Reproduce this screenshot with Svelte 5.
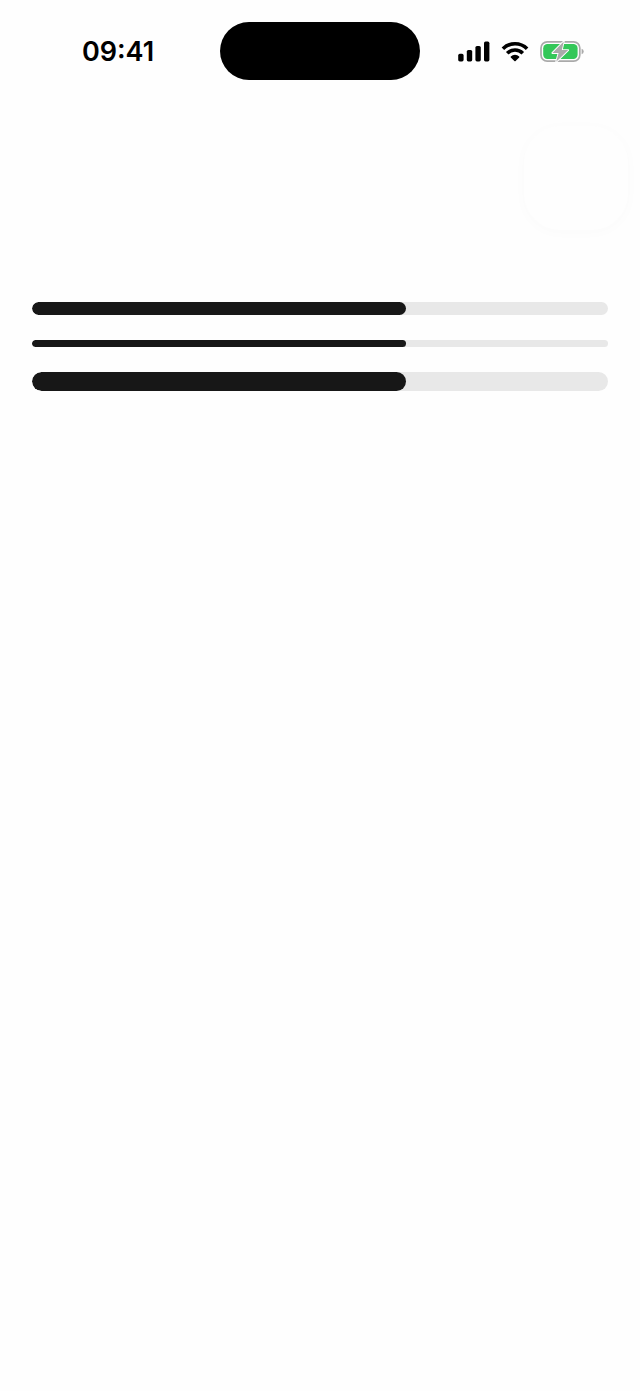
<script>
  const bars = [
    { label: 'Default progress', size: 'medium' },
    { label: 'Small progress', size: 'small' },
    { label: 'Large progress', size: 'large' }
  ];
  const value = 65;
</script>

<div class="screen">
  <header class="status">
    <time class="time">09:41</time>
    <div class="island"></div>
    <div class="indicators">
      <svg width="32" height="22" viewBox="0 0 32 22" aria-hidden="true">
        <rect x="0.2" y="12.8" width="5.4" height="7.6" rx="1.6" />
        <rect x="8.8" y="9" width="5.4" height="11.4" rx="1.6" />
        <rect x="17.4" y="5" width="5.4" height="15.4" rx="1.6" />
        <rect x="26" y="0.6" width="5.4" height="19.8" rx="1.6" />
      </svg>
      <svg width="28" height="22" viewBox="0 0 28 22" aria-hidden="true">
        <g fill="none" stroke="#000" stroke-width="3.6">
          <path d="M1.9 7.8a17.1 17.1 0 0 1 24.2 0" />
          <path d="M6.2 12.3a11 11 0 0 1 15.6 0" />
        </g>
        <path d="M9.8 15.4a6 6 0 0 1 8.4 0q.4.5 0 1l-3.6 3.6q-.6.5-1.2 0l-3.6-3.6q-.4-.5 0-1z" />
      </svg>
      <svg width="44" height="22" viewBox="0 0 44 22" aria-hidden="true">
        <rect x="1" y="0.9" width="38.8" height="19.2" rx="6.2" fill="none" stroke="#aaa" stroke-width="1.7" />
        <path d="M41.6 7.7q2.1.8 2.1 2.8t-2.1 2.8z" fill="#aaa" />
        <rect x="3.2" y="3.1" width="34.4" height="14.8" rx="4.2" fill="#34c759" />
        <path d="M23.8 0.4L12.4 12h6.2l-2.4 8.8L28.2 9.1h-6.4z" fill="#aaa" stroke="#fff" stroke-width="1.8" stroke-linejoin="round" paint-order="stroke" />
      </svg>
    </div>
  </header>

  <div class="toolbar">
    <button class="action" type="button" aria-label="Options"></button>
  </div>

  <main class="bars">
    {#each bars as bar}
      <progress class={bar.size} {value} max="100" aria-label={bar.label}></progress>
    {/each}
  </main>
</div>

<style>
  :global(body) {
    margin: 0;
    background: #fefefe;
  }

  .screen {
    min-height: 100vh;
    box-sizing: border-box;
    font-family: Inter, "Liberation Sans", sans-serif;
    color: #000;
  }

  .status {
    display: grid;
    grid-template-columns: 1fr 200px 1fr;
    align-items: center;
    justify-items: center;
    padding-top: 22px;
  }

  .time {
    padding: 2px 0 0 16px;
    font-size: 27px;
    line-height: 32px;
    font-weight: 600;
  }

  .island {
    width: 200px;
    height: 58px;
    border-radius: 32px;
    background: #000;
  }

  .indicators {
    display: flex;
    gap: 11px;
    padding: 2px 18px 0 0;
  }

  .toolbar {
    display: flex;
    justify-content: flex-end;
    padding: 46px 12px 0;
  }

  .action {
    width: 104px;
    height: 104px;
    padding: 0;
    border: 0;
    border-radius: 36px;
    background: #fefefe;
    box-shadow: 0 2px 14px rgb(0 0 0 / 2%);
  }

  .bars {
    display: flex;
    flex-direction: column;
    gap: 25px;
    padding: 72px 32px 32px;
  }

  progress {
    display: block;
    width: 100%;
    height: 13px;
    border: 0;
    border-radius: 10px;
    overflow: hidden;
    appearance: none;
    background: #e8e8e8;
  }

  .small {
    height: 7px;
  }

  .large {
    height: 19px;
  }

  progress::-webkit-progress-bar {
    background: #e8e8e8;
  }

  progress::-webkit-progress-value {
    border-radius: 10px;
    background: #171717;
  }
</style>
